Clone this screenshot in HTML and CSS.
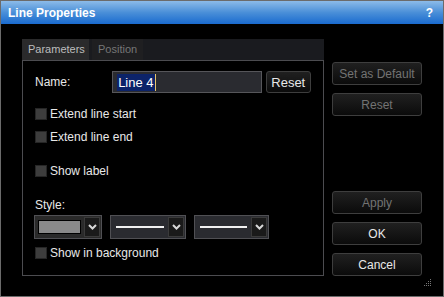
FILE: index.html
```html
<!DOCTYPE html>
<html>
<head>
  <title>Line Properties</title>
  <link rel="stylesheet" href="styles.css">
</head>
<body>
  <div class="window">
    <div class="titlebar">
      <span>Line Properties</span>
      <span class="help">?</span>
    </div>

    <div class="content">
      <div class="tabbox">
        <div class="tabstrip">
          <div class="tab active">Parameters</div>
          <div class="tab">Position</div>
        </div>

        <div class="panel">
          <div class="name-row">
            <span class="name-label">Name:</span>
            <div class="text-input"><span class="selected">Line 4</span><span class="caret"></span></div>
            <button class="btn small">Reset</button>
          </div>

          <label class="check row-start"><span class="box"></span>Extend line start</label>
          <label class="check row-end"><span class="box"></span>Extend line end</label>
          <label class="check row-label"><span class="box"></span>Show label</label>

          <div class="style-label">Style:</div>
          <div class="style-row">
            <div class="combo color">
              <span class="swatch"></span>
              <span class="arrow"><svg width="9" height="6" viewBox="0 0 9 6"><path d="M1 1 L4.5 4.5 L8 1" fill="none" stroke="#d8d8d8" stroke-width="2"/></svg></span>
            </div>
            <div class="combo line">
              <span class="stroke"></span>
              <span class="arrow"><svg width="9" height="6" viewBox="0 0 9 6"><path d="M1 1 L4.5 4.5 L8 1" fill="none" stroke="#d8d8d8" stroke-width="2"/></svg></span>
            </div>
            <div class="combo line">
              <span class="stroke"></span>
              <span class="arrow"><svg width="9" height="6" viewBox="0 0 9 6"><path d="M1 1 L4.5 4.5 L8 1" fill="none" stroke="#d8d8d8" stroke-width="2"/></svg></span>
            </div>
          </div>

          <label class="check row-bg"><span class="box"></span>Show in background</label>
        </div>
      </div>

      <div class="actions">
        <button class="btn wide disabled">Set as Default</button>
        <button class="btn wide disabled">Reset</button>
        <button class="btn wide disabled push">Apply</button>
        <button class="btn wide">OK</button>
        <button class="btn wide">Cancel</button>
      </div>
    </div>

    <svg class="grip" width="8" height="8" viewBox="0 0 8 8">
      <rect x="6" y="0" width="1" height="1" fill="#777"/>
      <rect x="4" y="2" width="1" height="1" fill="#777"/>
      <rect x="6" y="2" width="1" height="1" fill="#777"/>
      <rect x="2" y="4" width="1" height="1" fill="#777"/>
      <rect x="4" y="4" width="1" height="1" fill="#777"/>
      <rect x="6" y="4" width="1" height="1" fill="#777"/>
      <rect x="0" y="6" width="1" height="1" fill="#777"/>
      <rect x="2" y="6" width="1" height="1" fill="#777"/>
      <rect x="4" y="6" width="1" height="1" fill="#777"/>
      <rect x="6" y="6" width="1" height="1" fill="#777"/>
    </svg>
  </div>
</body>
</html>
```

FILE: styles.css
```css
body {
  margin: 0;
  background: #000;
  font-family: "Liberation Sans", Arial, sans-serif;
  font-size: 12px;
  color: #e8e8e8;
}
.window {
  position: relative;
  width: 444px;
  height: 297px;
  box-sizing: border-box;
  border: 1px solid #6b6b6b;
  background: #000;
}
.titlebar {
  height: 23px;
  display: flex;
  align-items: center;
  justify-content: space-between;
  padding: 0 10px 0 7px;
  background: linear-gradient(#8cbbe9, #4a8fd8 50%, #1a6bcf);
  color: #fff;
  font-weight: bold;
  font-size: 12px;
}
.help {
  font-size: 12px;
}
.content {
  display: flex;
  padding: 15px 0 0 21px;
}
.tabbox {
  width: 302px;
}
.tabstrip {
  height: 21px;
  display: flex;
  gap: 3px;
  background: #1a1b1f;
}
.tab {
  padding: 0 6px;
  line-height: 21px;
  font-size: 11px;
  color: #767676;
  background: #1f1f21;
}
.tab.active {
  width: 55px;
  color: #bdbdbd;
  background: #2a2a2b;
}
.panel {
  height: 214px;
  border: 1px solid #4c4c50;
  padding: 0 12px;
  display: flex;
  flex-direction: column;
}
.name-row {
  margin-top: 10px;
  display: flex;
  align-items: center;
  height: 22px;
}
.name-label {
  width: 78px;
}
.text-input {
  width: 145px;
  height: 20px;
  padding-left: 4px;
  border: 1px solid #56565a;
  background: #2a2b30;
  display: flex;
  align-items: center;
  font-size: 13px;
}
.selected {
  background: #0c2369;
  color: #fff;
  line-height: 17px;
  padding: 0 1px;
}
.caret {
  width: 1px;
  height: 17px;
  background: #e6c46a;
}
.btn {
  font-family: "Liberation Sans", Arial, sans-serif;
  font-size: 12px;
  color: #e8e8e8;
  background: linear-gradient(#202020, #0b0b0b);
  border: 1px solid #3e3e3e;
  border-radius: 3px;
  padding: 0;
}
.btn.small {
  margin-left: 4px;
  width: 46px;
  height: 22px;
  font-size: 13px;
}
.btn.wide {
  width: 90px;
  height: 23px;
  font-size: 12px;
}
.btn.disabled {
  color: #737373;
}
.check {
  display: flex;
  align-items: center;
  height: 12px;
}
.box {
  width: 10px;
  height: 10px;
  margin-right: 3px;
  border: 1px solid #262626;
  background: #3d3d3d;
}
.row-start { margin-top: 15px; }
.row-end { margin-top: 11px; }
.row-label { margin-top: 22px; }
.row-bg { margin-top: 8px; }
.style-label {
  margin-top: 21px;
  line-height: 14px;
}
.style-row {
  margin-top: 3px;
  margin-left: -1px;
  display: flex;
  gap: 8px;
}
.combo {
  height: 22px;
  display: flex;
  align-items: center;
  justify-content: space-between;
  border: 1px solid #505054;
  background: #2a2b30;
}
.combo.color {
  width: 66px;
  background: #2a2a2a;
}
.combo.line {
  width: 74px;
  gap: 4px;
}
.combo.line + .combo.line {
  width: 73px;
}
.swatch {
  width: 41px;
  height: 12px;
  margin-left: 3px;
  border: 1px solid #000;
  background: #8a8a8a;
}
.stroke {
  flex: 1;
  height: 2px;
  margin-left: 5px;
  background: #f0f0f0;
}
.arrow {
  width: 16px;
  height: 20px;
  margin-right: 1px;
  box-sizing: border-box;
  border: 1px solid #3a3a3a;
  background: #1a1a1a;
  display: flex;
  align-items: center;
  justify-content: center;
}
.actions {
  margin-left: 8px;
  padding-top: 23px;
  display: flex;
  flex-direction: column;
  gap: 8px;
}
.actions .push {
  margin-top: 67px;
}
.grip {
  position: absolute;
  right: 11px;
  bottom: 9px;
}
```
